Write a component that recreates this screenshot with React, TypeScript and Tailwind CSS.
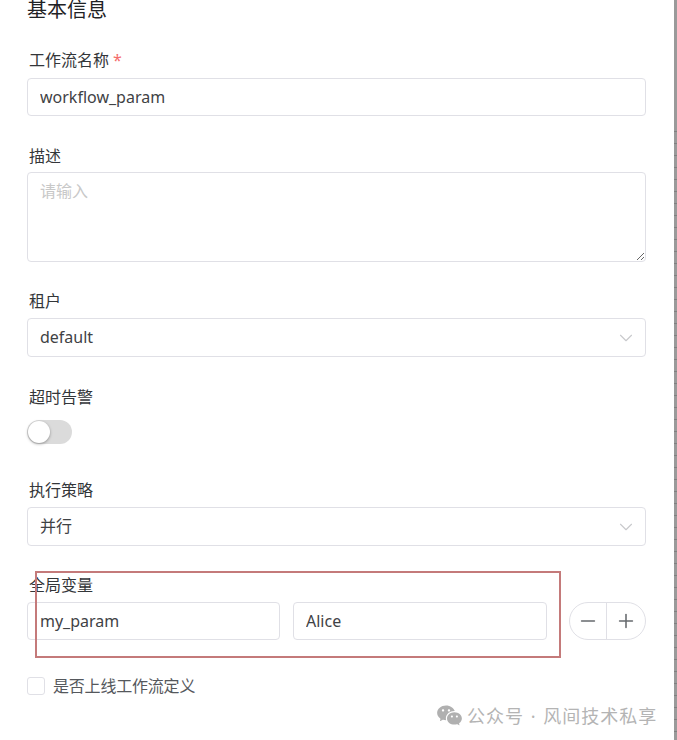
import { ReactNode } from 'react'
import { ChevronDown, Minus, Plus } from 'lucide-react'
import { RiWechatFill } from 'react-icons/ri'

const fontStack = "font-['Noto_Sans','Noto_Sans_CJK_SC',sans-serif]"
const boxClass =
  'rounded-[4px] border border-[#e0e0e6] bg-white px-3 text-[16px] text-[#3f4245] outline-none'

function Field({ label, required, className, children }: { label: string; required?: boolean; className: string; children: ReactNode }) {
  return (
    <div className={className}>
      <div className="h-6 pl-[2px] text-[16px] leading-6 text-[#333639]">
        {label}
        {required && <span className="ml-1 text-[#f56c6c]">*</span>}
      </div>
      {children}
    </div>
  )
}

function SelectBox({ value }: { value: string }) {
  return (
    <div className={`${boxClass} mt-[5px] flex h-[39px] w-full items-center justify-between pr-[8px]`}>
      <span className="-mt-[2px]">{value}</span>
      <ChevronDown className="h-[22px] w-[22px] text-[#c8c9cc]" strokeWidth={1.2} />
    </div>
  )
}

export default function App() {
  return (
    <div className={`${fontStack} relative flex h-[740px] w-[677px] overflow-hidden bg-white`}>
      <div className="flex-1 pl-[27px] pr-[28px]">
        <h2 className="text-[20px] leading-5 font-normal text-[#1f2225]">基本信息</h2>

        <Field label="工作流名称" required className="mt-7">
          <input readOnly value="workflow_param" className={`${boxClass} mt-[6px] h-[38px] w-full`} />
        </Field>

        <Field label="描述" className="mt-7">
          <textarea readOnly placeholder="请输入" className={`${boxClass} mt-1 block h-[90px] w-full py-[6px] placeholder:text-[#c8c8c8]`} />
        </Field>

        <Field label="租户" className="mt-[27px]">
          <SelectBox value="default" />
        </Field>

        <Field label="超时告警" className="mt-7">
          <div className="relative mt-[11px] h-6 w-[45px] rounded-full bg-[#dbdbdb]">
            <div className="absolute top-[1px] left-[1px] h-[22px] w-[22px] rounded-full bg-white shadow-[0_1px_3px_rgba(0,0,0,0.35)]" />
          </div>
        </Field>

        <Field label="执行策略" className="mt-[34px]">
          <SelectBox value="并行" />
        </Field>

        <Field label="全局变量" className="mt-[27px]">
          <div className="mt-[5px] flex items-center">
            <input readOnly value="my_param" className={`${boxClass} h-[38px] w-[253px]`} />
            <input readOnly value="Alice" className={`${boxClass} ml-[13px] h-[38px] w-[254px]`} />
            <div className="ml-[22px] flex h-[38px] w-[77px] shrink-0 rounded-full border border-[#e0e0e6] text-[#66696d]">
              <div className="flex w-[37px] items-center justify-center border-r border-[#e0e0e6]">
                <Minus className="h-[22px] w-[22px]" strokeWidth={1.7} />
              </div>
              <div className="flex flex-1 items-center justify-center">
                <Plus className="h-[22px] w-[22px]" strokeWidth={1.7} />
              </div>
            </div>
          </div>
        </Field>

        <label className="mt-[37px] flex items-center">
          <span className="h-[18px] w-[18px] rounded-[3px] border border-[#e0e0e6]" />
          <span className="ml-2 text-[16px] leading-[18px] tracking-[-0.2px] text-[#55585c]">是否上线工作流定义</span>
        </label>
      </div>

      {/* edge of the window behind the drawer */}
      <div className="flex w-[3px] flex-col">
        <div className="h-[120px] bg-[#9a9a9a]" />
        <div className="flex-1 bg-[repeating-linear-gradient(to_bottom,#9a9a9a_0,#9a9a9a_11px,#808080_11px,#808080_12px)]" />
      </div>

      {/* annotation drawn over the screenshot */}
      <div className="absolute top-[571px] left-[35px] h-[87px] w-[526px] border-2 border-[#c47a7a]" />

      <div className="absolute top-[702px] left-[436px] flex items-center text-[18px] leading-[22px] tracking-[1px] [word-spacing:1px] text-[#b4b4b4]">
        <RiWechatFill className="mr-[4px] h-[27px] w-[27px] text-[#b0b0b0]" />
        <span>公众号 · 风间技术私享</span>
      </div>
    </div>
  )
}
